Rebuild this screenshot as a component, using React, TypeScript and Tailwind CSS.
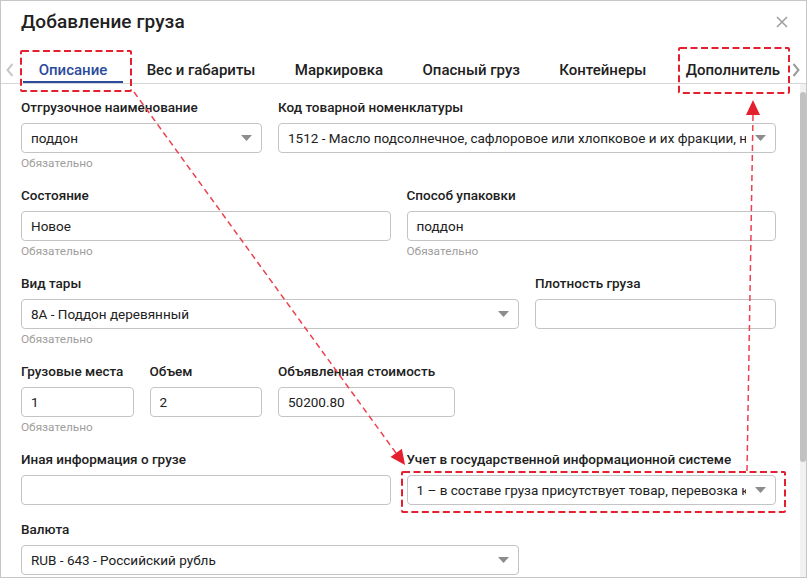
import React from "react";

type FieldProps = {
  label: string;
  value?: string;
  select?: boolean;
  required?: boolean;
  span: string;
};

function Caret() {
  return (
    <svg width="11" height="6" viewBox="0 0 11 6" className="shrink-0">
      <path d="M0 0 L11 0 L5.5 6 Z" fill="#8c8c8c" />
    </svg>
  );
}

function Field({ label, value = "", select, required, span }: FieldProps) {
  return (
    <div className={`${span} flex flex-col min-w-0`}>
      <div className="text-[13.5px] leading-[18px] font-medium text-[#212121] mb-[7px] whitespace-nowrap">
        {label}
      </div>
      <div className="h-[30px] border border-[#c4c4c4] rounded-[4px] bg-white flex items-center pl-[9px] pr-[9px] gap-[9px]">
        <span className="flex-1 min-w-0 overflow-hidden whitespace-nowrap text-[13.5px] text-[#212121]">
          {value}
        </span>
        {select && <Caret />}
      </div>
      {required && (
        <div className="mt-[3px] text-[11.8px] leading-[15px] text-[#9e9e9e]">Обязательно</div>
      )}
    </div>
  );
}

const tabs = ["Описание", "Вес и габариты", "Маркировка", "Опасный груз", "Контейнеры", "Дополнительно"];

export default function App() {
  return (
    <div className="relative w-[807px] h-[578px] overflow-hidden bg-white border border-[#c6c6c6] font-['Roboto',sans-serif] flex flex-col">
      {/* header */}
      <div className="h-[42px] shrink-0 flex items-center justify-between pl-[20px] pr-[18px]">
        <div className="text-[19px] font-medium text-[#212121] tracking-[0.1px]">Добавление груза</div>
        <svg width="12" height="12" viewBox="0 0 12 12">
          <path d="M1 1 L11 11 M11 1 L1 11" stroke="#a0a0a0" strokeWidth="1.6" />
        </svg>
      </div>

      {/* tabs */}
      <div className="h-[41px] shrink-0 flex border-b border-[#d6d6d6]">
        <div className="w-[18px] shrink-0 flex items-end pb-[6px] justify-center">
          <svg width="8" height="14" viewBox="0 0 8 14">
            <path d="M6.5 1 L1.5 7 L6.5 13" stroke="#c8c8c8" strokeWidth="2" fill="none" />
          </svg>
        </div>
        <div className="flex-1 min-w-0 overflow-hidden flex">
          {tabs.map((t, i) => (
            <div key={t} className="relative shrink-0 px-[19.7px] pt-[17px]">
              <div
                className={`text-[15px] leading-[20px] font-medium whitespace-nowrap ${
                  i === 0 ? "text-[#2b4b9c]" : "text-[#212121]"
                }`}
              >
                {t}
              </div>
              {i === 0 && <div className="absolute left-[4px] right-[4px] bottom-0 h-[2px] bg-[#2b4b9c]" />}
            </div>
          ))}
        </div>
        <div className="w-[26px] shrink-0 flex items-end pb-[6px] pl-[12px]">
          <svg width="8" height="14" viewBox="0 0 8 14">
            <path d="M1.5 1 L6.5 7 L1.5 13" stroke="#9a9a9a" strokeWidth="2" fill="none" />
          </svg>
        </div>
      </div>

      {/* body */}
      <div className="flex-1 min-h-0 flex">
        <div className="pl-[20px] pt-[14px] w-[775px] shrink-0">
          <div className="grid grid-cols-12 gap-x-4 gap-y-[15px]">
            <Field span="col-span-4" label="Отгрузочное наименование" value="поддон" select required />
            <Field
              span="col-span-8"
              label="Код товарной номенклатуры"
              value="1512 - Масло подсолнечное, сафлоровое или хлопковое и их фракции, нерафинированные или рафинированные"
              select
            />
            <Field span="col-span-6" label="Состояние" value="Новое" required />
            <Field span="col-span-6" label="Способ упаковки" value="поддон" required />
            <Field span="col-span-8" label="Вид тары" value="8A - Поддон деревянный" select required />
            <Field span="col-span-4" label="Плотность груза" />
            <Field span="col-span-2" label="Грузовые места" value="1" required />
            <Field span="col-span-2" label="Объем" value="2" />
            <Field span="col-span-3" label="Объявленная стоимость" value="50200.80" />
            <div className="col-span-5" />
            <Field span="col-span-6" label="Иная информация о грузе" />
            <Field
              span="col-span-6"
              label="Учет в государственной информационной системе"
              value="1 – в составе груза присутствует товар, перевозка которого подлежит учету"
              select
            />
            <Field span="col-span-8" label="Валюта" value="RUB - 643 - Российский рубль" select />
          </div>
        </div>
        <div className="flex-1" />
        <div className="w-[6px] shrink-0 bg-[#f1f1f1] pt-[8px]">
          <div className="h-[370px] rounded-[3px] bg-[#c1c1c1]" />
        </div>
      </div>

      {/* callouts */}
      <svg className="absolute left-0 top-0 pointer-events-none" width="807" height="578" viewBox="0 0 807 578">
        <g fill="none" stroke="#e5202e" strokeWidth="2" strokeDasharray="7 3.5">
          <rect x="20" y="50" width="110" height="40" rx="1" />
          <rect x="678" y="47" width="110" height="45" rx="1" />
          <rect x="401" y="471" width="383" height="40" rx="1" />
        </g>
        <g fill="none" stroke="#ee3f4f" strokeWidth="1.5" strokeDasharray="6 4">
          <line x1="133" y1="91" x2="395" y2="452" />
          <line x1="746" y1="470" x2="752" y2="114" />
        </g>
        <g fill="#e5202e">
          <polygon points="404,464 389.5,456 400.9,447.8" />
          <polygon points="752,99 745,114 759,114" />
        </g>
      </svg>
    </div>
  );
}
